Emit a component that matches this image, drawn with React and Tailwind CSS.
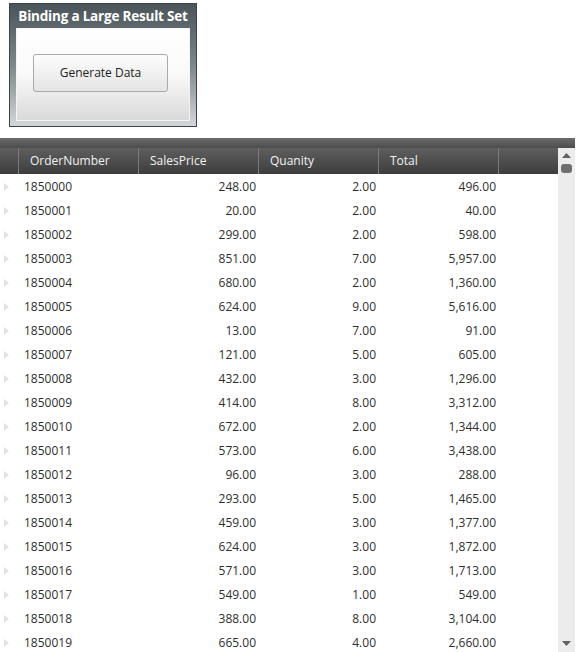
import React from "react";

const rows = [
  ["1850000", "248.00", "2.00", "496.00"],
  ["1850001", "20.00", "2.00", "40.00"],
  ["1850002", "299.00", "2.00", "598.00"],
  ["1850003", "851.00", "7.00", "5,957.00"],
  ["1850004", "680.00", "2.00", "1,360.00"],
  ["1850005", "624.00", "9.00", "5,616.00"],
  ["1850006", "13.00", "7.00", "91.00"],
  ["1850007", "121.00", "5.00", "605.00"],
  ["1850008", "432.00", "3.00", "1,296.00"],
  ["1850009", "414.00", "8.00", "3,312.00"],
  ["1850010", "672.00", "2.00", "1,344.00"],
  ["1850011", "573.00", "6.00", "3,438.00"],
  ["1850012", "96.00", "3.00", "288.00"],
  ["1850013", "293.00", "5.00", "1,465.00"],
  ["1850014", "459.00", "3.00", "1,377.00"],
  ["1850015", "624.00", "3.00", "1,872.00"],
  ["1850016", "571.00", "3.00", "1,713.00"],
  ["1850017", "549.00", "1.00", "549.00"],
  ["1850018", "388.00", "8.00", "3,104.00"],
  ["1850019", "665.00", "4.00", "2,660.00"],
];

const headers = ["OrderNumber", "SalesPrice", "Quanity", "Total"];

export default function App() {
  return (
    <div
      className="w-[579px] h-[652px] overflow-hidden bg-white text-[12px] text-[#2e2e2e]"
      style={{ fontFamily: '"Segoe UI", "Open Sans", "Noto Sans", sans-serif' }}
    >
      {/* demo panel */}
      <div className="ml-[9px] mt-[3px] w-[188px] h-[124px] border border-[#3d4447] bg-gradient-to-b from-[#4b5458] via-[#7d868b] to-[#d3d7da] px-[6px] pb-[5px] flex flex-col">
        <div className="h-[24px] flex items-center justify-center text-white font-bold text-[13.5px] tracking-[-0.2px]">
          Binding a Large Result Set
        </div>
        <div className="flex-1 border border-[#f4f4f4] bg-gradient-to-b from-white via-[#fafafa] to-[#d9d9d9] flex items-start pl-[16px] pt-[25px]">
          <button className="w-[135px] h-[38px] rounded-[3px] border border-[#a9a9a9] bg-gradient-to-b from-[#fdfdfd] to-[#e4e4e4] text-[12px] text-[#222]">
            Generate Data
          </button>
        </div>
      </div>

      {/* grid */}
      <div className="mt-[11px] w-[575px]">
        <div className="h-[10px] bg-gradient-to-b from-[#6b6b6b] to-[#4d4d4d]" />
        <div className="flex">
          <div className="w-[558px]">
            <div className="h-[26px] flex bg-gradient-to-b from-[#5f5f5f] to-[#3d3d3d] text-[#f2f2f2]">
              <div className="w-[19px] border-r border-[#7a7a7a]" />
              {headers.map((h) => (
                <div
                  key={h}
                  className="w-[120px] border-r border-[#7a7a7a] pl-[11px] flex items-center"
                >
                  {h}
                </div>
              ))}
            </div>
            {rows.map((r) => (
              <div key={r[0]} className="h-[24px] flex items-center pt-[2px]">
                <div className="w-[19px] flex items-center pl-[4px]">
                  <svg width="5" height="8" viewBox="0 0 5 8">
                    <path d="M0 0 L5 4 L0 8 Z" fill="#e2e2e2" />
                  </svg>
                </div>
                <div className="w-[120px] pl-[5px]">{r[0]}</div>
                <div className="w-[120px] pr-[3px] text-right">{r[1]}</div>
                <div className="w-[120px] pr-[3px] text-right">{r[2]}</div>
                <div className="w-[120px] pr-[3px] text-right">{r[3]}</div>
              </div>
            ))}
          </div>
          <div className="flex-1 bg-[#ececec] h-[504px] flex flex-col items-center">
            <svg width="9" height="5" viewBox="0 0 9 5" className="mt-[5px]">
              <path d="M0 5 L4.5 0 L9 5 Z" fill="#606060" />
            </svg>
            <div className="mt-[6px] w-[11px] h-[9px] rounded-[3px] bg-[#6f6f6f]" />
            <div className="flex-1" />
            <svg width="9" height="5" viewBox="0 0 9 5" className="mb-[6px]">
              <path d="M0 0 L4.5 5 L9 0 Z" fill="#606060" />
            </svg>
          </div>
        </div>
      </div>
    </div>
  );
}
